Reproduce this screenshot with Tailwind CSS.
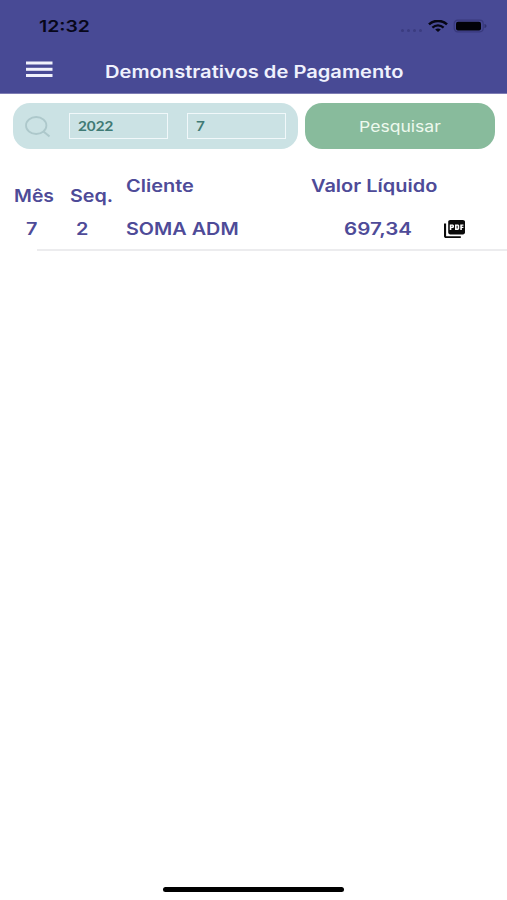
<!DOCTYPE html>
<html lang="pt-BR">

<head>
  <meta charset="UTF-8">
  <meta name="viewport" content="width=device-width, initial-scale=1.0">
  <title>Demonstrativos de Pagamento</title>
  <script src="https://cdn.jsdelivr.net/npm/@tailwindcss/browser@4"></script>
</head>

<body class="bg-white font-['Inter',sans-serif]">
  <div class="w-[507px] h-[900px] flex flex-col overflow-hidden">
    <header class="h-[94px] shrink-0 bg-[#484a95] border-b border-[#7e7db4]">
      <!-- Status bar -->
      <div class="h-[50px] pl-[39px] pr-[20px] pt-[18px] flex items-start justify-between">
        <span class="text-[16px] leading-none font-semibold text-[#07071a] origin-left scale-x-[1.21]">12:32</span>
        <div class="flex items-center h-4">
          <div class="flex gap-[3px] mt-[8px] mr-[6px]">
            <span class="w-[3px] h-[3px] rounded-full bg-[#3b3c80]"></span>
            <span class="w-[3px] h-[3px] rounded-full bg-[#3b3c80]"></span>
            <span class="w-[3px] h-[3px] rounded-full bg-[#3b3c80]"></span>
            <span class="w-[3px] h-[3px] rounded-full bg-[#3b3c80]"></span>
          </div>
          <svg class="w-[20px] h-[12px]" viewBox="0 0 20 12" preserveAspectRatio="none" fill="none" stroke="#060614">
            <path d="M1 4.4C6 -0.2 14 -0.2 19 4.4" stroke-width="2.6" />
            <path d="M4.4 7.6C7.6 4.6 12.4 4.6 15.6 7.6" stroke-width="2.3" />
            <path d="M10 12L7.2 9.6C8.9 8.2 11.1 8.2 12.8 9.6Z" fill="#060614" stroke="none" />
          </svg>
          <svg class="w-[34px] h-[14px] ml-[5px]" viewBox="0 0 34 14">
            <rect x="1.2" y="1.2" width="29" height="11.6" rx="3.5" fill="none" stroke="#38397d" stroke-width="1.2" />
            <rect x="3" y="2.8" width="25" height="8.6" rx="2" fill="#020208" />
            <path d="M31.5 5v4c1.2-.4 2-1.1 2-2s-.8-1.6-2-2z" fill="#30316c" />
          </svg>
        </div>
      </div>
      <!-- Title bar -->
      <div class="flex items-start pl-[26px]">
        <svg class="w-[27px] h-[17px] mt-[11px]" viewBox="0 0 27 17" fill="#f0f1fb">
          <rect y="0.5" width="26.5" height="3" />
          <rect y="6.8" width="26.5" height="3" />
          <rect y="13" width="26.5" height="3" />
        </svg>
        <h1 class="ml-[52px] mt-[14px] text-[17px] leading-none font-semibold text-[#eff1fd] whitespace-nowrap origin-left scale-x-[1.184]">Demonstrativos de Pagamento</h1>
      </div>
    </header>

    <!-- Search -->
    <div class="flex pt-[9px] pl-[13px] gap-[7px]">
      <div class="w-[285px] h-[46px] rounded-[17px] bg-[#cbe2e4] flex items-center">
        <svg class="w-[26px] h-[22px] ml-[12px] mt-[2px]" viewBox="0 0 26 22" fill="none" stroke="#adc8cb" stroke-width="1.8">
          <ellipse cx="11.2" cy="9.5" rx="10.2" ry="8.5" />
          <path d="M18.5 15.5L24.5 20.5" stroke-width="2" />
        </svg>
        <div class="w-[99px] h-[26px] ml-[18px] pl-[8px] border-[1.5px] border-[#f1f8fa] flex items-center">
          <span class="mt-[2px] font-['Lato',sans-serif] font-bold text-[12.5px] text-[#3f7a75] origin-left scale-x-[1.22]">2022</span>
        </div>
        <div class="w-[99px] h-[26px] ml-[19px] pl-[8px] border-[1.5px] border-[#f1f8fa] flex items-center">
          <span class="mt-[2px] font-['Lato',sans-serif] font-bold text-[12.5px] text-[#3f7a75] origin-left scale-x-[1.22]">7</span>
        </div>
      </div>
      <button class="w-[190px] h-[46px] rounded-[17px] bg-[#88bb9c] flex items-center justify-center text-[15px] text-[#eef9ee]">
        <span class="mt-[2px] scale-x-[1.17]">Pesquisar</span>
      </button>
    </div>

    <!-- Table header -->
    <div class="flex items-start mt-[29px] text-[17px] leading-none font-semibold text-[#4e4b98] whitespace-nowrap">
      <div class="w-[56px] ml-[14px] mt-[10px]"><span class="inline-block origin-left scale-x-[1.14]">Mês</span></div>
      <div class="w-[56px] mt-[10px]"><span class="inline-block origin-left scale-x-[1.16]">Seq.</span></div>
      <div class="w-[185px]"><span class="inline-block origin-left scale-x-[1.175]">Cliente</span></div>
      <div><span class="inline-block origin-left scale-x-[1.175]">Valor Líquido</span></div>
    </div>
    <!-- Table row -->
    <div class="flex items-start mt-[16px] h-[28px] text-[17px] leading-none font-semibold text-[#4e4b98] whitespace-nowrap">
      <div class="w-[50px] ml-[26px]"><span class="inline-block origin-left scale-x-[1.17]">7</span></div>
      <div class="w-[50px]"><span class="inline-block origin-left scale-x-[1.17]">2</span></div>
      <div class="w-[218px]"><span class="inline-block origin-left scale-x-[1.164]">SOMA ADM</span></div>
      <div class="w-[99px]"><span class="inline-block origin-left scale-x-[1.21]">697,34</span></div>
      <svg class="w-[21px] h-[18px] ml-[1px] -mt-px" viewBox="2 2 20 20" preserveAspectRatio="none" fill="#0a0a0a">
        <path d="M20 2H8c-1.1 0-2 .9-2 2v12c0 1.1.9 2 2 2h12c1.1 0 2-.9 2-2V4c0-1.1-.9-2-2-2zm-8.5 7.5c0 .83-.67 1.5-1.5 1.5H9v2H7.5V7H10c.83 0 1.5.67 1.5 1.5v1zm5 2c0 .83-.67 1.5-1.5 1.5h-2.5V7H15c.83 0 1.5.67 1.5 1.5v3zm4-3H19v1h1.5V11H19v2h-1.5V7h3v1.5zM9 9.5h1v-1H9v1zM4 6H2v14c0 1.1.9 2 2 2h14v-2H4V6zm10 5.5h1v-3h-1v3z" />
      </svg>
    </div>
    <div class="ml-[37px] h-[2px] shrink-0 bg-[#ececee]"></div>

    <!-- Home indicator -->
    <div class="mt-auto mb-[8px] mx-auto w-[181px] h-[5px] rounded-full bg-black"></div>
  </div>
</body>

</html>
